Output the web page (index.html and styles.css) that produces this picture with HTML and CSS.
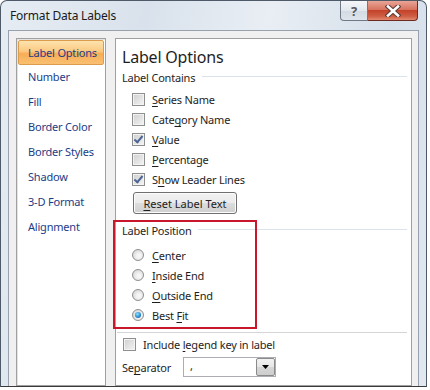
FILE: index.html
```html
<!DOCTYPE html>
<html lang="en">
<head>
  <meta charset="UTF-8">
  <title>Format Data Labels</title>
  <link rel="stylesheet" href="styles.css">
</head>
<body>
  <div class="window">
    <div class="titlebar">
      <span class="title">Format Data Labels</span>
      <div class="caption-buttons">
        <span class="btn-help">?</span>
        <span class="btn-close">
          <svg width="16" height="12" viewBox="0 0 16 12">
            <path d="M3 1.5 L13 10.5 M13 1.5 L3 10.5" stroke="#5a3a36" stroke-width="4.6" stroke-linecap="square"/>
            <path d="M3 1.5 L13 10.5 M13 1.5 L3 10.5" stroke="#fff" stroke-width="2.6" stroke-linecap="square"/>
          </svg>
        </span>
      </div>
    </div>

    <div class="client">
      <ul class="nav">
        <li class="active">Label Options</li>
        <li>Number</li>
        <li>Fill</li>
        <li>Border Color</li>
        <li>Border Styles</li>
        <li>Shadow</li>
        <li>3-D Format</li>
        <li>Alignment</li>
      </ul>

      <div class="pane">
        <h2>Label Options</h2>

        <div class="group-title">Label Contains</div>
        <div class="options">
          <div class="row"><span class="box"></span><span><u>S</u>eries Name</span></div>
          <div class="row"><span class="box"></span><span>Cate<u>g</u>ory Name</span></div>
          <div class="row"><span class="box checked"></span><span><u>V</u>alue</span></div>
          <div class="row"><span class="box"></span><span><u>P</u>ercentage</span></div>
          <div class="row"><span class="box checked"></span><span>S<u>h</u>ow Leader Lines</span></div>
        </div>
        <button class="reset"><u>R</u>eset Label Text</button>

        <div class="group-title position-title">Label Position</div>
        <div class="options radios">
          <div class="row"><span class="radio"></span><span><u>C</u>enter</span></div>
          <div class="row"><span class="radio"></span><span><u>I</u>nside End</span></div>
          <div class="row"><span class="radio"></span><span><u>O</u>utside End</span></div>
          <div class="row"><span class="radio selected"></span><span>Best <u>F</u>it</span></div>
        </div>

        <div class="rule"></div>

        <div class="row legend-row"><span class="box"></span><span>Include <u>l</u>egend key in label</span></div>
        <div class="separator-row">
          <span class="sep-label">Se<u>p</u>arator</span>
          <div class="combo">
            <span class="combo-value">,</span>
            <span class="combo-button">
              <svg width="8" height="5" viewBox="0 0 8 5"><path d="M0 0 H7 L3.5 4 Z" fill="#000"/></svg>
            </span>
          </div>
        </div>

        <!-- red annotation round the Label Position group -->
        <div class="highlight"></div>
      </div>
    </div>
  </div>
</body>
</html>
```

FILE: styles.css
```css
* {
  box-sizing: border-box;
}

body {
  margin: 0;
  background: #fff;
  font-family: "Noto Sans", "Open Sans", sans-serif;
  font-size: 11px;
  letter-spacing: -0.2px;
  color: #1e1e1e;
}

u {
  text-decoration-thickness: 1px;
  text-underline-offset: 2px;
  text-decoration-skip-ink: none;
}

/* Window frame */
.window {
  width: 427px;
  height: 387px;
  border: 1px solid #4f5a68;
  border-bottom-color: #3a3a3a;
  border-radius: 7px 7px 0 0;
  background: linear-gradient(100deg, #e6ecf3 0%, #d9e2ec 30%, #e9eef4 55%, #d5dfea 80%, #e1e8f0 100%);
  padding: 0 7px;
  display: flex;
  flex-direction: column;
}

.titlebar {
  height: 29px;
  display: flex;
  justify-content: space-between;
  align-items: flex-start;
}

.title {
  padding: 6px 0 0 2px;
  font-size: 12px;
  color: #1a1a1a;
}

.caption-buttons {
  display: flex;
  margin-right: 1px;
}

.btn-help, .btn-close {
  height: 20px;
  display: flex;
  align-items: center;
  justify-content: center;
}

.btn-help {
  width: 28px;
  border: 1px solid #6f7884;
  border-top: none;
  border-radius: 0 0 0 4px;
  background: linear-gradient(#f4f6f9, #e3e8ee 50%, #d3dae3 51%, #dfe5ec);
  color: #55595f;
  font-weight: bold;
  font-size: 13px;
}

.btn-close {
  width: 50px;
  border: 1px solid #6e2a20;
  border-top: none;
  border-left: none;
  border-radius: 0 0 4px 0;
  background: linear-gradient(#e9a597, #d7735f 45%, #c4432b 50%, #cf5d43 80%, #e08a70);
}

/* Client area */
.client {
  flex: 1;
  border: 1px solid #97a2ae;
  border-bottom: none;
  background: #f0f0f0;
  padding: 7px 6px 0 7px;
  display: flex;
  gap: 9px;
}

.nav {
  list-style: none;
  margin: 0;
  padding: 1px;
  width: 90px;
  background: #fff;
  border: 1px solid #a0a0a0;
  box-shadow: inset 1px 1px 0 #e3e3e3;
}

.nav li {
  height: 25px;
  line-height: 24px;
  padding-left: 10px;
  color: #1d3c86;
}

.nav li.active {
  border: 1px solid #dc9c4e;
  border-radius: 2px;
  padding-left: 9px;
  background: linear-gradient(#fde3ae, #fbc981 45%, #f8ad55 55%, #f9c072);
}

.pane {
  flex: 1;
  position: relative;
  background: #fff;
  border: 1px solid #a0a0a0;
  padding: 0 4px 0 6px;
}

.pane h2 {
  margin: 0;
  padding-top: 6px;
  font-size: 16px;
  font-weight: normal;
  line-height: 24px;
  color: #1e1e1e;
}

.group-title {
  display: flex;
  align-items: center;
  height: 16px;
}

.group-title::after {
  content: "";
  flex: 1;
  height: 1px;
  margin-left: 7px;
  margin-top: -1px;
  background: #dae3eb;
}

.options {
  margin-top: 4px;
  padding-left: 10px;
}

.row {
  height: 20px;
  display: flex;
  align-items: center;
  gap: 7px;
}

.box {
  width: 13px;
  height: 13px;
  border: 1px solid #8e8f8f;
  background: linear-gradient(135deg, #cfcfcf, #f4f4f4);
  box-shadow: inset 0 0 0 1px #f3f3f3;
  display: flex;
  align-items: center;
  justify-content: center;
}

.box.checked::after {
  content: "";
  width: 3px;
  height: 7px;
  margin-top: -2px;
  border: solid #4d6595;
  border-width: 0 2px 2px 0;
  transform: rotate(40deg);
}

.reset {
  display: block;
  margin: 3px 0 0 11px;
  width: 104px;
  height: 22px;
  border: 1px solid #707070;
  border-radius: 3px;
  background: linear-gradient(#f2f2f2, #ebebeb 50%, #dddddd 51%, #cfcfcf);
  box-shadow: inset 0 0 0 1px #fcfcfc;
  font: inherit;
  color: #1e1e1e;
  padding: 0;
}

.position-title {
  margin-top: 8px;
}

.radios {
  margin-top: 7px;
}

.radios .row {
  gap: 8px;
}

.radio {
  width: 12px;
  height: 12px;
  border-radius: 50%;
  border: 1px solid #8e8f8f;
  background: radial-gradient(circle at 60% 60%, #f6f6f6 20%, #d2d2d2 90%);
  display: flex;
  align-items: center;
  justify-content: center;
}

.radio.selected::after {
  content: "";
  width: 6px;
  height: 6px;
  border-radius: 50%;
  background: radial-gradient(circle at 40% 35%, #8fe0ff, #2b8fd0 55%, #0d4e8c);
}

.rule {
  height: 1px;
  margin: 7px 0 1px -5px;
  background: #d5d5d5;
}

.legend-row {
  padding-left: 1px;
}

.separator-row {
  margin-top: 3px;
  display: flex;
  align-items: center;
}

.sep-label {
  width: 61px;
}

.combo {
  width: 93px;
  height: 20px;
  border: 1px solid #abadb3;
  background: #fff;
  display: flex;
  justify-content: space-between;
}

.combo-value {
  padding-left: 6px;
  line-height: 16px;
}

.combo-button {
  width: 19px;
  border: 1px solid #8a8a8a;
  border-radius: 2px;
  background: linear-gradient(#f2f2f2, #e6e6e6 50%, #d6d6d6 51%, #cdcdcd);
  display: flex;
  align-items: center;
  justify-content: center;
}

.highlight {
  position: absolute;
  left: -3px;
  top: 181px;
  width: 144px;
  height: 109px;
  border: 2px solid #c8172a;
  pointer-events: none;
}
```
